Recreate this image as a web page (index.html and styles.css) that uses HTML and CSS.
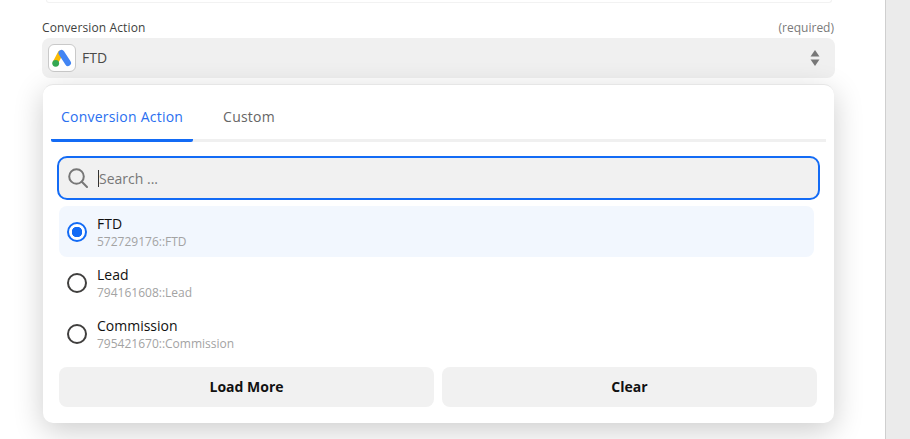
FILE: index.html
```html
<!DOCTYPE html>
<html lang="en">
<head>
    <meta charset="UTF-8">
    <title>Conversion Action</title>
    <link rel="stylesheet" href="styles.css">
</head>
<body>
    <div class="page">
        <main class="main">
            <div class="card-top"></div>

            <div class="field">
                <div class="field-label">
                    <span>Conversion Action</span>
                    <span class="required">(required)</span>
                </div>

                <div class="select">
                    <span class="app-icon">
                        <svg width="24" height="24" viewBox="0 0 24 24" fill="none">
                            <path d="M10.5 7 5.5 16.5" stroke="#fbbc04" stroke-width="5.4" stroke-linecap="round"/>
                            <path d="M11.5 7 18 17" stroke="#4285f4" stroke-width="6" stroke-linecap="round"/>
                            <circle cx="5.7" cy="17.3" r="3.4" fill="#34a853"/>
                        </svg>
                    </span>
                    <span class="select-value">FTD</span>
                    <svg class="select-arrows" width="10" height="16" viewBox="0 0 10 16">
                        <path d="M5 0 9.5 6.5H.5z" fill="#777"/>
                        <path d="M5 16 9.5 9.5H.5z" fill="#777"/>
                    </svg>
                </div>

                <!-- Dropdown aberto sobre o resto do form -->
                <div class="dropdown">
                    <div class="tabs">
                        <div class="tab active">Conversion Action</div>
                        <div class="tab">Custom</div>
                    </div>

                    <div class="search">
                        <svg width="20" height="20" viewBox="0 0 20 20" fill="none" stroke="#777" stroke-width="2">
                            <circle cx="8.5" cy="8.5" r="7.3"/>
                            <path d="M13.8 13.8 19 19" stroke-linecap="round"/>
                        </svg>
                        <span class="caret"></span>
                        <span class="placeholder">Search ...</span>
                    </div>

                    <div class="options">
                        <div class="option selected">
                            <span class="radio"></span>
                            <div>
                                <div class="option-name">FTD</div>
                                <div class="option-id">572729176::FTD</div>
                            </div>
                        </div>
                        <div class="option">
                            <span class="radio"></span>
                            <div>
                                <div class="option-name">Lead</div>
                                <div class="option-id">794161608::Lead</div>
                            </div>
                        </div>
                        <div class="option">
                            <span class="radio"></span>
                            <div>
                                <div class="option-name">Commission</div>
                                <div class="option-id">795421670::Commission</div>
                            </div>
                        </div>
                    </div>

                    <div class="buttons">
                        <button class="btn">Load More</button>
                        <button class="btn">Clear</button>
                    </div>
                </div>
            </div>
        </main>
        <aside class="side"></aside>
    </div>
</body>
</html>
```

FILE: styles.css
```css
html, body {
    margin: 0;
    padding: 0;
    height: 100%;
    overflow: hidden;
}
body {
    font-family: 'Open Sans', 'Noto Sans', sans-serif;
    background: #fff;
    color: #403f3e;
}
.page {
    display: flex;
    height: 439px;
}
.main {
    width: 886px;
    box-sizing: border-box;
    border-right: 1px solid #cfcfcf;
    padding: 0 50px 0 42px;
}
.side {
    flex: 1;
    background: #ebebeb;
}
.card-top {
    height: 2px;
    margin: 0 3px 0 4px;
    border: 1px solid #f2f2f2;
    border-top: none;
    border-radius: 0 0 6px 6px;
}
.field {
    position: relative;
    margin-top: 16px;
}
.field-label {
    display: flex;
    justify-content: space-between;
    font-size: 12px;
    line-height: 18px;
    letter-spacing: 0.12px;
}
.required {
    margin-right: 1px;
    letter-spacing: 0;
    color: #7a7a7a;
}
.select {
    display: flex;
    align-items: center;
    height: 40px;
    margin-top: 1px;
    padding: 0 15px 0 6px;
    background: #f0f0f0;
    border-radius: 8px;
}
.app-icon {
    display: flex;
    align-items: center;
    justify-content: center;
    width: 28px;
    height: 28px;
    box-sizing: border-box;
    background: #fff;
    border: 1px solid #c9c9c9;
    border-radius: 6px;
}
.select-value {
    flex: 1;
    margin-left: 6px;
    padding-bottom: 2px;
    font-size: 14px;
    font-weight: 500;
    color: #4a4a48;
}
.dropdown {
    position: absolute;
    top: 65px;
    left: 1px;
    width: 791px;
    height: 339px;
    box-sizing: border-box;
    padding: 0 8px;
    background: #fff;
    border-top: 1px solid #e6e6e6;
    border-radius: 10px;
    box-shadow: 0 8px 30px rgba(0, 0, 0, 0.2);
}
.tabs {
    display: flex;
    height: 54px;
    box-sizing: content-box;
    border-bottom: 3px solid #f0f0f0;
}
.tab {
    height: 32px;
    margin-right: 20px;
    padding: 22px 10px 0;
    font-size: 14px;
    font-weight: 500;
    line-height: 20px;
    letter-spacing: 0.22px;
    color: #666;
}
.tab.active {
    color: #2a6ff0;
    border-bottom: 3px solid #136bf5;
    border-radius: 2px;
}
.search {
    display: flex;
    align-items: center;
    height: 44px;
    box-sizing: border-box;
    margin: 14px 6px 0;
    padding: 0 9px;
    background: #f1f1f1;
    border: 2.5px solid #136bf5;
    border-radius: 10px;
}
.caret {
    width: 1px;
    height: 17px;
    margin-left: 10px;
    background: #333;
}
.placeholder {
    font-size: 14px;
    color: #777;
}
.options {
    margin: 6px 12px 0 8px;
}
.option {
    display: flex;
    align-items: center;
    gap: 10px;
    height: 51px;
    padding: 0 8px;
    border-radius: 8px;
}
.option.selected {
    background: #f2f7fe;
}
.radio {
    width: 20px;
    height: 20px;
    box-sizing: border-box;
    border: 2px solid #403f3e;
    border-radius: 50%;
}
.selected .radio {
    border-color: #136bf5;
    background: radial-gradient(circle, #136bf5 0 5px, #fff 5.5px);
}
.option-name {
    font-size: 14px;
    font-weight: 500;
    line-height: 19px;
    color: #111;
}
.option-id {
    padding-top: 1px;
    font-size: 12px;
    line-height: 16px;
    color: #a3a3a3;
}
.buttons {
    display: flex;
    gap: 8px;
    margin: 8px 9px 0 8px;
}
.btn {
    flex: 1;
    height: 40px;
    padding: 0 0 2px;
    background: #f1f1f1;
    border: none;
    border-radius: 8px;
    font-family: inherit;
    font-size: 14px;
    font-weight: 700;
    color: #111;
}
```
